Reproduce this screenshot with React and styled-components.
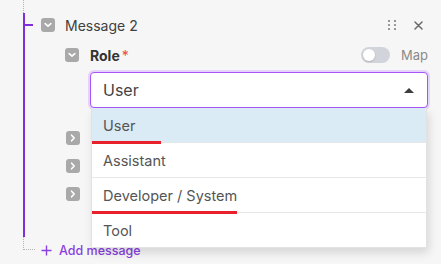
import styled, { createGlobalStyle } from "styled-components";

const GlobalStyle = createGlobalStyle`
  html, body {
    margin: 0;
    padding: 0;
    background: #f6f6f6;
    font-family: Inter, "Noto Sans", sans-serif;
  }
`;

const roles = [
  { label: "User", active: true, mark: 69 },
  { label: "Assistant" },
  { label: "Developer / System", mark: 145 },
  { label: "Tool" },
];

// collapsed sub-fields, their labels sit under the open menu
const subFields = ["content", "name", "tool_calls"];

const ChevronDown = () => (
  <svg width="8" height="6" viewBox="0 0 8 6">
    <path d="M1.2 1.6 L4 4.2 L6.8 1.6" fill="none" stroke="#fff" strokeWidth="1.6" strokeLinecap="round" strokeLinejoin="round" />
  </svg>
);

const ChevronRight = () => (
  <svg width="6" height="8" viewBox="0 0 6 8">
    <path d="M1.6 1.2 L4.2 4 L1.6 6.8" fill="none" stroke="#fff" strokeWidth="1.6" strokeLinecap="round" strokeLinejoin="round" />
  </svg>
);

const DragDots = () => (
  <svg width="8" height="10" viewBox="0 0 8 10">
    {[1, 5, 9].map((y) =>
      [1, 7].map((x) => <circle key={`${x}-${y}`} cx={x} cy={y} r="1.1" fill="#8a8a8a" />)
    )}
  </svg>
);

const CloseIcon = () => (
  <svg width="9" height="9" viewBox="0 0 9 9">
    <path d="M1 1 L8 8 M8 1 L1 8" stroke="#6b6b6b" strokeWidth="1.5" strokeLinecap="round" />
  </svg>
);

const PlusIcon = () => (
  <svg width="11" height="11" viewBox="0 0 11 11">
    <path d="M5.5 0.5 V10.5 M0.5 5.5 H10.5" stroke="#8b3fe0" strokeWidth="1.4" />
  </svg>
);

const App = () => {
  return (
    <>
      <GlobalStyle />
      <Tree>
        <TopStub />
        <Branch>
          <HeaderRow>
            <Tick />
            <Toggler>
              <ChevronDown />
            </Toggler>
            <Title>Message 2</Title>
            <Actions>
              <DragDots />
              <CloseButton>
                <CloseIcon />
              </CloseButton>
            </Actions>
          </HeaderRow>
          <Body>
            <FieldRow>
              <Toggler>
                <ChevronDown />
              </Toggler>
              <FieldLabel>
                Role<Required>*</Required>
              </FieldLabel>
              <MapSwitch>
                <Track>
                  <Knob />
                </Track>
                <MapLabel>Map</MapLabel>
              </MapSwitch>
            </FieldRow>
            <SelectWrap>
              <SelectBox>
                <SelectValue>User</SelectValue>
                <Caret />
              </SelectBox>
              <Menu>
                {roles.map((r) => (
                  <MenuItem key={r.label} $active={r.active} $mark={r.mark}>
                    {r.label}
                  </MenuItem>
                ))}
              </Menu>
            </SelectWrap>
            {subFields.map((f) => (
              <SubRow key={f}>
                <Toggler>
                  <ChevronRight />
                </Toggler>
              </SubRow>
            ))}
          </Body>
        </Branch>
        <AddRow>
          <Connector />
          <PlusIcon />
          <AddText>Add message</AddText>
        </AddRow>
      </Tree>
    </>
  );
};

export default App;

const Tree = styled.div`
  margin-left: 23px;
  padding-right: 13px;
  display: flex;
  flex-direction: column;
`;

const TopStub = styled.div`
  height: 13px;
  border-left: 1px dotted #b4b4b4;
`;

const Branch = styled.div`
  border-left: 2px solid #7e2fd9;
  padding-bottom: 29px;
  display: flex;
  flex-direction: column;
`;

const HeaderRow = styled.div`
  height: 24px;
  display: flex;
  align-items: center;
`;

const Tick = styled.div`
  width: 8px;
  height: 1.5px;
  background: #7e2fd9;
  margin-right: 8px;
`;

const Toggler = styled.div`
  width: 14px;
  height: 14px;
  border-radius: 3px;
  background: #a9a9a9;
  display: flex;
  align-items: center;
  justify-content: center;
  flex-shrink: 0;
`;

const Title = styled.div`
  margin-left: 10px;
  font-size: 14px;
  color: #404040;
`;

const Actions = styled.div`
  margin-left: auto;
  display: flex;
  align-items: center;
  gap: 18px;
  padding-right: 5px;
`;

const CloseButton = styled.div`
  display: flex;
  align-items: center;
`;

const Body = styled.div`
  padding-left: 40px;
  display: flex;
  flex-direction: column;
`;

const FieldRow = styled.div`
  margin-top: 3px;
  height: 30px;
  display: flex;
  align-items: center;
`;

const FieldLabel = styled.div`
  margin-left: 11px;
  font-size: 14px;
  font-weight: 700;
  color: #333;
`;

const Required = styled.span`
  color: #e5484d;
  font-weight: 400;
  margin-left: 2px;
`;

const MapSwitch = styled.div`
  margin-left: auto;
  display: flex;
  align-items: center;
  gap: 11px;
`;

const Track = styled.div`
  width: 29px;
  height: 16px;
  border-radius: 8px;
  background: #d1d5db;
  display: flex;
  align-items: center;
  padding-left: 2px;
  box-sizing: border-box;
`;

const Knob = styled.div`
  width: 12px;
  height: 12px;
  border-radius: 50%;
  background: #fff;
  box-shadow: 0 1px 2px rgba(0, 0, 0, 0.15);
`;

const MapLabel = styled.div`
  font-size: 13px;
  color: #8a8a8a;
`;

const SelectWrap = styled.div`
  position: relative;
  margin: 2px 0 16px 25px;
`;

const SelectBox = styled.div`
  height: 36px;
  box-sizing: border-box;
  border: 1px solid #a855f7;
  border-radius: 4px;
  box-shadow: 0 0 0 2px #e6d3fb;
  background: #fff;
  display: flex;
  align-items: center;
  padding: 0 13px 0 12px;
`;

const SelectValue = styled.div`
  font-size: 16px;
  color: #444;
`;

const Caret = styled.div`
  margin-left: auto;
  width: 0;
  height: 0;
  border-left: 5px solid transparent;
  border-right: 5px solid transparent;
  border-bottom: 5px solid #3d3d3d;
`;

const Menu = styled.div`
  position: absolute;
  top: 36px;
  left: 1px;
  right: 1px;
  background: #fff;
  border: 1px solid #e2e2e2;
  border-top: none;
  border-radius: 0 0 3px 3px;
  box-shadow: 2px 5px 10px rgba(0, 0, 0, 0.13);
  display: flex;
  flex-direction: column;
  z-index: 2;
`;

const MenuItem = styled.div`
  position: relative;
  height: 34px;
  display: flex;
  align-items: center;
  padding-left: 11px;
  font-size: 14.5px;
  color: #555;
  background: ${(p) => (p.$active ? "#daebf5" : "#fff")};
  & + & {
    border-top: 1px solid #e8e8e8;
  }
  &::after {
    content: "";
    display: ${(p) => (p.$mark ? "block" : "none")};
    position: absolute;
    left: 0;
    bottom: -2px;
    width: ${(p) => p.$mark || 0}px;
    height: 3px;
    background: #e8202a;
    z-index: 1;
  }
`;

const SubRow = styled.div`
  height: 28px;
  display: flex;
  align-items: center;
  padding-left: 1px;
`;

const AddRow = styled.div`
  height: 26px;
  display: flex;
  align-items: center;
`;

const Connector = styled.div`
  align-self: flex-start;
  width: 11px;
  height: 12px;
  border-left: 1px dotted #b4b4b4;
  border-bottom: 1px dotted #b4b4b4;
  margin-right: 6px;
`;

const AddText = styled.div`
  margin-left: 7px;
  font-size: 12.5px;
  font-weight: 500;
  color: #8b3fe0;
`;
